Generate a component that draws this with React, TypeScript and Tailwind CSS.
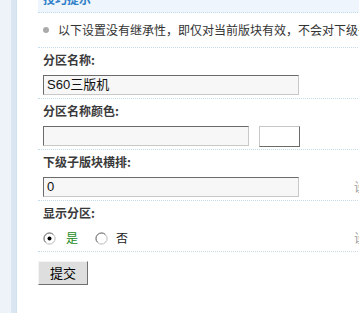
import React from "react";

function Radio({ checked }: { checked?: boolean }) {
  return (
    <svg width="13" height="13" viewBox="0 0 13 13" className="block">
      <circle cx="6.5" cy="6.5" r="5.5" fill="#fff" stroke="#a0a0a0" strokeWidth="1" />
      <path d="M2.6 10.4 A5.5 5.5 0 0 1 10.4 2.6" fill="none" stroke="#808080" strokeWidth="1" />
      <path d="M10.4 2.6 A5.5 5.5 0 0 1 2.6 10.4" fill="none" stroke="#e4e4e4" strokeWidth="1" />
      {checked && <circle cx="6.5" cy="6.5" r="2" fill="#000" />}
    </svg>
  );
}

function Label({ children }: { children: React.ReactNode }) {
  return (
    <div className="h-[24px] leading-[24px] pl-[5px] font-bold text-[12px] text-[#3a3a3a]">{children}</div>
  );
}

function Tip() {
  return <div className="text-[12px] leading-[20px] text-[#999] whitespace-nowrap">设置</div>;
}

const inputCls =
  "h-[20px] bg-[#f7f7f7] border border-t-[#6b6b6b] border-l-[#6b6b6b] border-b-[#c8c8c8] border-r-[#c8c8c8] pl-[3px] text-[13px] leading-[18px] text-[#111] font-['Liberation_Sans','Noto_Sans_CJK_SC',sans-serif]";

export default function App() {
  return (
    <div className="w-[359px] h-[313px] overflow-hidden flex bg-white font-['Noto_Sans_CJK_SC',sans-serif]">
      <div className="w-[11px] shrink-0 bg-[#edf3f9]" />
      <div className="w-[6px] shrink-0 bg-[#dae7f3] border-r border-[#d0e1ef]" />
      <div className="w-[21px] shrink-0 bg-white" />
      <div className="w-[360px] shrink-0 flex flex-col">
        {/* header */}
        <div className="h-[12px] bg-[#eef5fc] overflow-hidden border-b border-dotted border-[#c4dbea] box-content">
          <div className="mt-[-8px] pl-[5px] text-[12px] leading-[14px] font-bold text-[#2f7fc8]">技巧提示</div>
        </div>
        {/* tip row */}
        <div className="h-[34px] flex items-center border-b border-dotted border-[#c4dbea] box-content">
          <div className="ml-[5px] w-[6px] h-[6px] shrink-0 rounded-full bg-[#aaaaaa]" />
          <span className="ml-[9px] text-[12px] text-[#333] whitespace-nowrap">以下设置没有继承性，即仅对当前版块有效，不会对下级子版块产生影响。</span>
        </div>

        <Label>分区名称:</Label>
        <div className="h-[26px] flex border-b border-dotted border-[#c4dbea] box-content">
          <div className="w-[316px] shrink-0 pl-[5px] pt-[3px]">
            <div className={inputCls + " w-[256px]"}>S60三版机</div>
          </div>
        </div>

        <Label>分区名称颜色:</Label>
        <div className="h-[26px] flex border-b border-dotted border-[#c4dbea] box-content">
          <div className="w-[316px] shrink-0 pl-[5px] pt-[3px] flex">
            <div className={inputCls + " w-[206px]"} />
            <div className="ml-[10px] w-[41px] h-[21px] bg-white border border-t-[#c8c8c8] border-l-[#c8c8c8] border-b-[#6b6b6b] border-r-[#6b6b6b]" />
          </div>
        </div>

        <Label>下级子版块横排:</Label>
        <div className="h-[26px] flex border-b border-dotted border-[#c4dbea] box-content">
          <div className="w-[316px] shrink-0 pl-[5px] pt-[3px]">
            <div className={inputCls + " w-[256px]"}>0</div>
          </div>
          <div className="pt-[3px]"><Tip /></div>
        </div>

        <Label>显示分区:</Label>
        <div className="h-[26px] flex items-center border-b border-dotted border-[#c4dbea] box-content">
          <div className="w-[316px] shrink-0 pl-[5px] flex items-center text-[12px]">
            <Radio checked />
            <span className="ml-[10px] text-[#1a8a1a]">是</span>
            <span className="ml-[17px]"><Radio /></span>
            <span className="ml-[8px] text-[#222]">否</span>
          </div>
          <Tip />
        </div>

        <div className="pt-[9px]">
          <div className="w-[50px] h-[24px] flex items-center justify-center bg-[#dedede] border border-t-[#f4f4f4] border-l-[#f4f4f4] border-b-[#707070] border-r-[#707070] text-[13px] text-black">
            提交
          </div>
        </div>
      </div>
    </div>
  );
}
